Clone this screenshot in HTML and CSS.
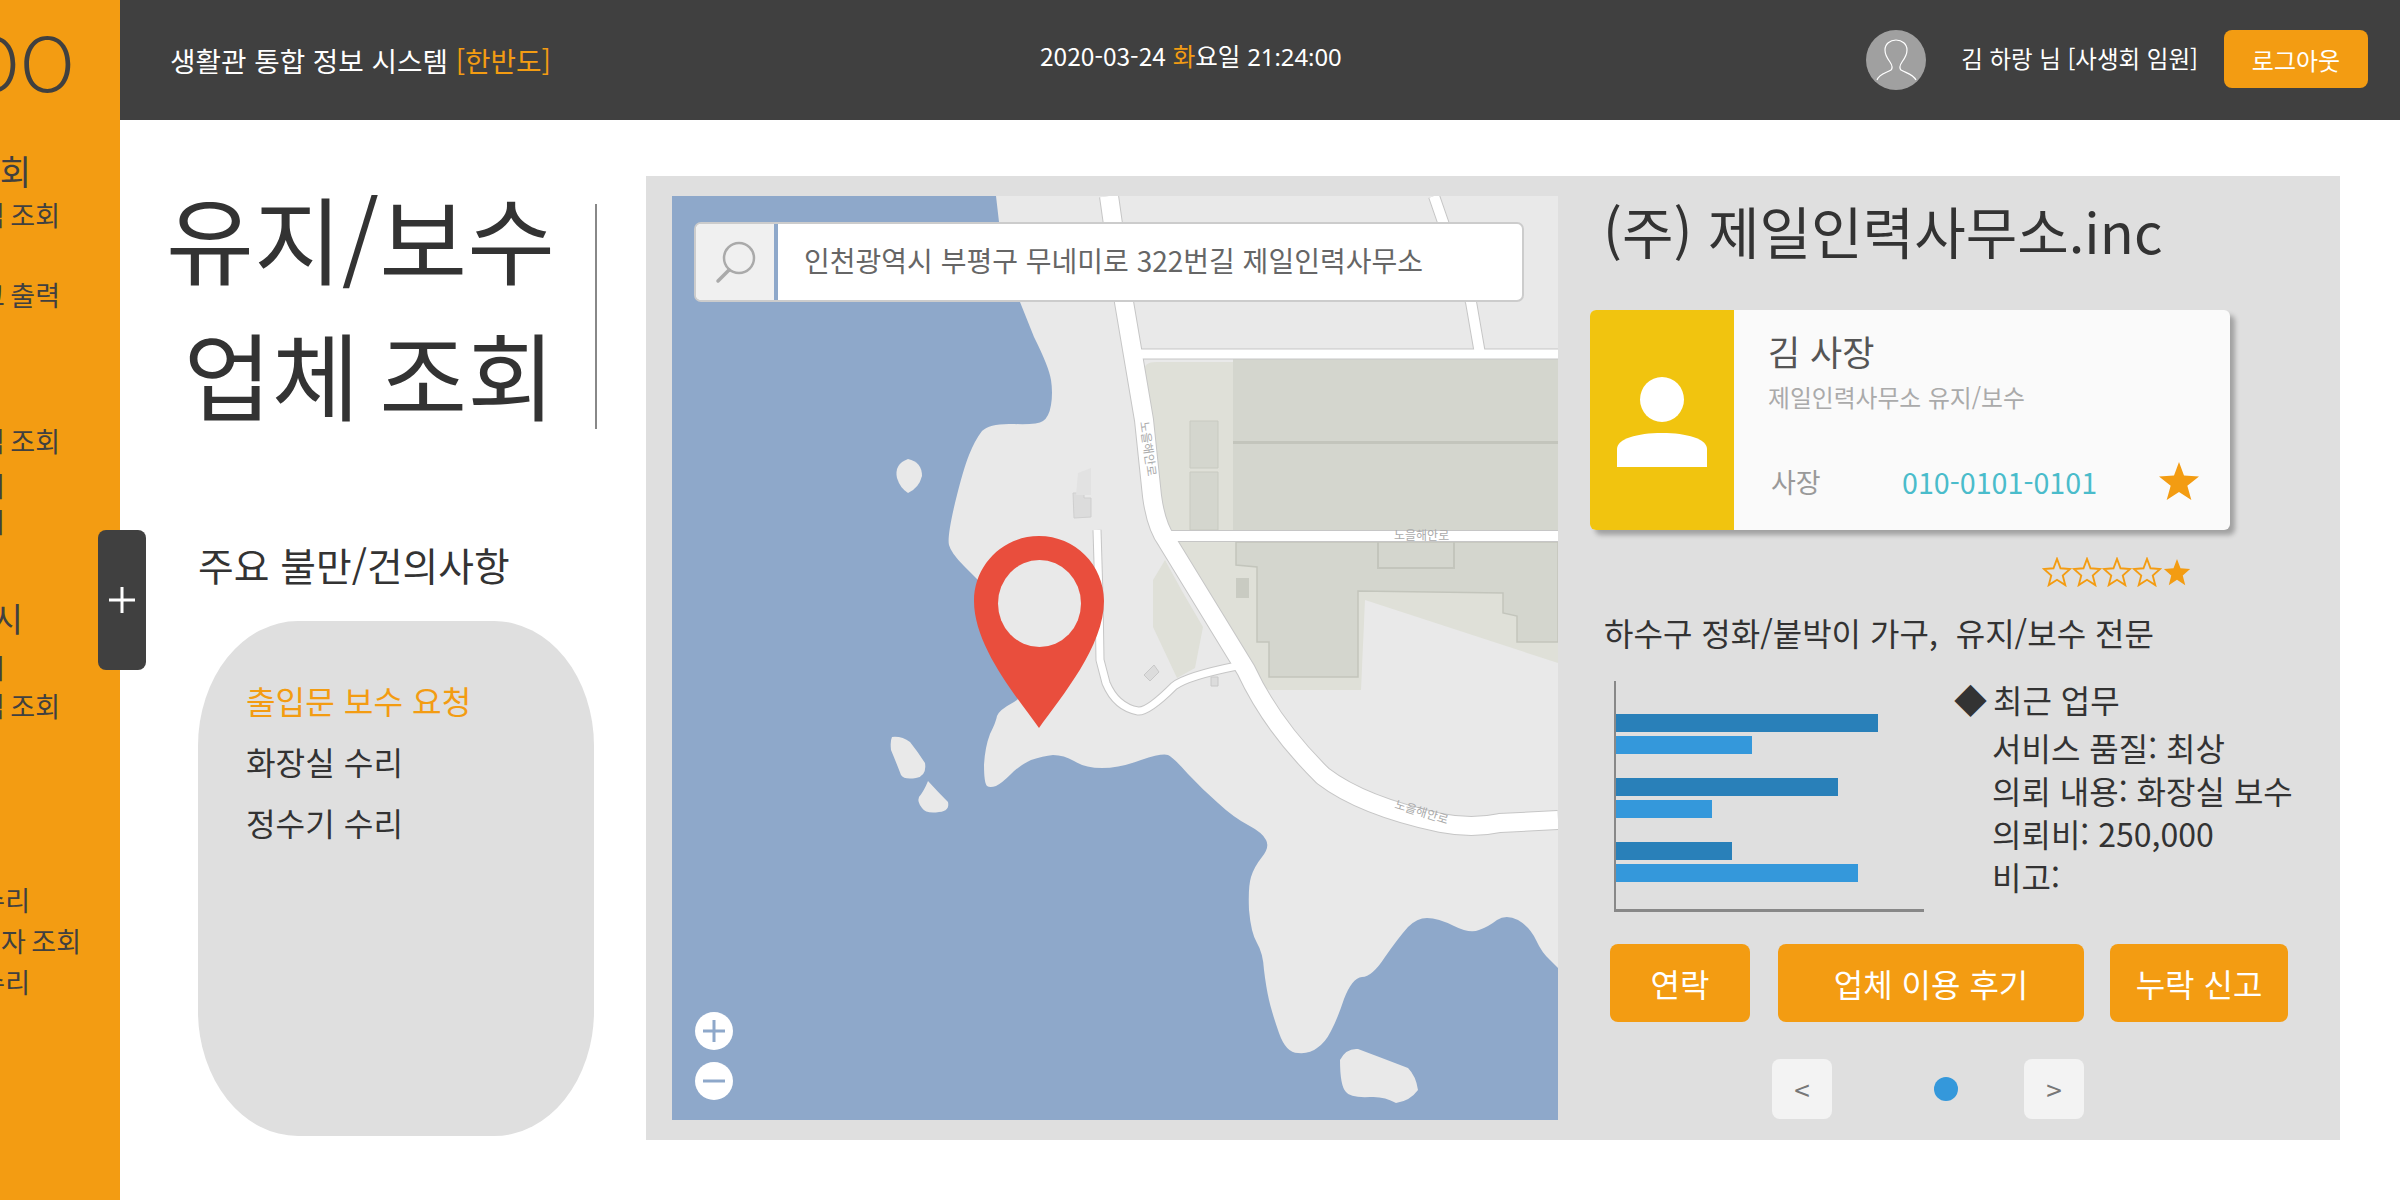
FILE: index.html
```html
<!DOCTYPE html>
<html lang="ko">
<head>
	<meta charset="utf-8">
	<title>유지/보수 업체 조회</title>
	<link rel="stylesheet" href="styles.css">
</head>
<body>
	<div class="app">
		<aside class="sidebar">
			<div class="logo">OO</div>
			<div class="nav-row nav-head end-30 gap-top">업무 조회</div>
			<div class="nav-row end-60 gap-0">내역 조회</div>
			<div class="nav-row end-60 gap-1">보고 출력</div>
			<div class="nav-row end-60 gap-2">내역 조회</div>
			<div class="nav-row end-2 gap-3">시설 관리</div>
			<div class="nav-row end-2 gap-4">시설 관리</div>
			<div class="nav-row nav-head end-22 gap-5">시설 감시</div>
			<div class="nav-row end-2 gap-6">시설 관리</div>
			<div class="nav-row end-60 gap-7">내역 조회</div>
			<div class="nav-row end-29 gap-8">시설 수리</div>
			<div class="nav-row end-80 gap-9">관리자 조회</div>
			<div class="nav-row end-29 gap-9">시설 수리</div>
		</aside>
		<button class="side-toggle" type="button">
			<svg width="28" height="28" viewBox="0 0 28 28"><path d="M14 1v26M1 14h26" stroke="#fff" stroke-width="3"/></svg>
		</button>

		<div class="page">
			<header class="topbar">
				<div class="system-name">생활관 통합 정보 시스템 <span class="accent">[한반도]</span></div>
				<div class="clock">2020-03-24 <span class="accent">화</span>요일 <span class="clock-time">21:24:00</span></div>
				<div class="avatar">
					<svg width="60" height="60" viewBox="0 0 60 60"><path d="M11 50C13 44 20 43 25 40C27 38 26 35 24 32C21 28 19 24 19 20C19 14 24 10 30 10C36 10 41 14 41 20C41 24 39 28 36 32C34 35 33 38 35 40C40 43 47 44 50 50" fill="none" stroke="#fff" stroke-width="1.2"/></svg>
				</div>
				<div class="user-name">김 하랑 님 [사생회 임원]</div>
				<button class="logout" type="button">로그아웃</button>
			</header>

			<main class="content">
				<section class="left-col">
					<div class="page-title">
						<h1>유지/보수<br>업체 조회</h1>
					</div>
					<h2 class="complaint-title">주요 불만/건의사항</h2>
					<ul class="complaints">
						<li class="active">출입문 보수 요청</li>
						<li>화장실 수리</li>
						<li>정수기 수리</li>
					</ul>
				</section>

				<section class="panel">
					<div class="map">
						<svg class="map-art" width="886" height="924" viewBox="0 0 886 924">
							<rect width="886" height="924" fill="#8ea8ca"/>
							<!-- land -->
							<path fill="#e9e9e9" d="M324 0L327 26L348 106L362 141Q377 171 379 184Q381 197 379 209Q377 221 371 225Q365 229 342 228Q318 227 310 235Q303 244 297 259Q291 274 283 307Q275 341 277 349Q279 357 292 370L306 384L340 460L365 490L342 506Q327 514 325 520Q324 526 318 538Q313 551 312 569Q312 587 315 590Q318 592 324 590Q330 587 339 578Q348 569 359 564Q371 560 381 559Q392 559 402 565Q413 572 430 572Q448 572 469 564Q490 557 496 559Q502 562 516 578Q531 594 546 607Q561 621 576 629Q591 637 594 644Q598 651 590 661Q582 671 579 681Q576 691 577 714Q579 737 585 747Q591 757 592 774Q594 791 597 804Q600 817 607 837Q614 857 626 857Q638 858 645 852Q653 847 659 835Q665 824 672 803Q680 782 690 781Q700 781 713 761Q727 741 736 731Q745 722 755 722Q766 722 782 730Q798 738 807 734Q816 731 825 724Q834 718 846 724Q858 731 864 744Q870 757 878 764L886 772L886 0Z"/>
							<path fill="#e9e9e9" d="M236 263Q250 266 250 280Q247 292 236 297Q228 292 225 282Q222 268 236 263Z"/>
							<path fill="#e9e9e9" d="M220 541Q230 540 238 546Q246 556 253 567Q255 580 244 582Q232 584 229 579Q224 566 219 554Q218 545 220 541Z"/>
							<path fill="#e9e9e9" d="M256 585Q266 596 276 606Q278 615 267 616Q254 618 250 612Q245 606 247 601Q252 595 256 585Z"/>
							<path fill="#e9e9e9" d="M668 864Q674 852 686 853Q710 862 736 872Q744 880 746 894Q738 905 724 907Q712 900 698 901Q678 902 674 896Q668 890 668 864Z"/>

							<!-- blocks -->
							<path fill="#dfe0d8" d="M484 166H886V334H490Q484 300 472 175Q472 166 484 166Z"/>
							<path fill="#d4d6ce" d="M561 163H886V334H561Z"/>
							<path fill="#c3c5bc" d="M561 245H886V248H561Z"/>
							<path fill="#d4d6ce" stroke="#c8cac1" d="M518 225H546V272H518ZM518 276H546V334H518Z"/>
							<path fill="#dfe0d8" d="M505 346H886V467L693 404L689 494H597L570 480Z"/>
							<path fill="#d4d6ce" stroke="#c3c5bc" stroke-width="1.5" d="M564 346H886V446H845V420L831 417V397L686 395V481H597V446H585V371L564 369Z"/>
							<path fill="none" stroke="#c3c5bc" stroke-width="2" d="M706 346V372H782V346"/>
							<path fill="#c9cbc2" d="M564 382H577V402H564Z"/>
							<path fill="#dfe0d8" d="M493 364L481 384V431L505 482L523 472L531 431L510 395Z"/>
							<path fill="#dcdcdc" stroke="#cfcfcf" d="M401 297H412V302H419V321L402 322Z"/>
							<path fill="#e2e2e2" d="M406 277L419 272V299H404Z"/>
							<path fill="#dcdcdc" stroke="#c8c8c8" d="M482 469L487 476L478 485L472 479Z"/>
							<path fill="#dcdcdc" stroke="#c8c8c8" d="M539 481H546V490H539Z"/>

							<!-- roads -->
							<g class="road-edge">
								<path stroke-width="20" d="M437 0L452 106L472 224L480 300Q484 330 495 345L574 474Q600 530 651 580Q690 610 769 627Q800 633 828 627L886 624"/>
								<path stroke-width="12" d="M762 0L771 26L799 106L808 158"/>
								<path stroke-width="11" d="M462 158H886"/>
								<path stroke-width="12" d="M495 340H886"/>
								<path stroke-width="9" d="M425 334L427 400L428 464L434 487Q444 511 466 515Q476 516 502 490Q515 480 565 470"/>
							</g>
							<g class="road">
								<path stroke-width="18" d="M437 0L452 106L472 224L480 300Q484 330 495 345L574 474Q600 530 651 580Q690 610 769 627Q800 633 828 627L886 624"/>
								<path stroke-width="10" d="M762 0L771 26L799 106L808 158"/>
								<path stroke-width="9" d="M462 158H886"/>
								<path stroke-width="10" d="M495 340H886"/>
								<path stroke-width="7" d="M425 334L427 400L428 464L434 487Q444 511 466 515Q476 516 502 490Q515 480 565 470"/>
							</g>
							<text class="road-label" x="722" y="344">노을해안로</text>
							<text class="road-label" transform="translate(468 226) rotate(82)">노을해안로</text>
							<text class="road-label" transform="translate(722 612) rotate(17)">노을해안로</text>

							<!-- pin -->
							<path fill="#e94e3d" d="M367 340C403 340 432 369 432 405C432 450 390 500 367 532C344 500 302 450 302 405C302 369 331 340 367 340Z"/>
							<ellipse cx="367.500" cy="407.500" rx="41.500" ry="43.500" fill="#e9e9e9"/>
						</svg>

						<div class="search-bar">
							<div class="search-icon">
								<svg width="44" height="44" viewBox="0 0 44 44"><ellipse cx="26" cy="18" rx="15" ry="15" fill="none" stroke="#aaa" stroke-width="2.500"/><path d="M16 30L5 41" stroke="#aaa" stroke-width="3.500" stroke-linecap="round"/></svg>
							</div>
							<div class="search-text">인천광역시 부평구 무네미로 322번길 제일인력사무소</div>
						</div>
						<div class="zoom-ctrl">
							<div class="zoom-btn"><svg width="38" height="38" viewBox="0 0 38 38"><path d="M19 8v22M8 19h22" stroke="#8ea8ca" stroke-width="3"/></svg></div>
							<div class="zoom-btn"><svg width="38" height="38" viewBox="0 0 38 38"><path d="M8 19h22" stroke="#8ea8ca" stroke-width="3"/></svg></div>
						</div>
					</div>

					<div class="info">
						<h2 class="company">(주) 제일인력사무소.inc</h2>
						<div class="card">
							<div class="card-side">
								<svg width="90" height="90" viewBox="0 0 90 90"><ellipse cx="45" cy="22.500" rx="22" ry="22.500"/><path d="M0 90V72C0 62 20 56 45 56C70 56 90 62 90 72V90Z"/></svg>
							</div>
							<div class="card-body">
								<div class="card-name">김 사장</div>
								<div class="card-sub">제일인력사무소 유지/보수</div>
								<div class="card-foot">
									<span class="card-role">사장</span>
									<span class="card-phone">010-0101-0101</span>
									<svg class="card-star" width="40" height="38" viewBox="0 0 24 24" preserveAspectRatio="none"><path d="M12 0L15 8.500L24 9.200L17 15L19.400 24L12 19L4.600 24L7 15L0 9.200L9 8.500Z"/></svg>
								</div>
							</div>
						</div>
						<div class="rating">
							<svg class="star-line" width="30" height="30" viewBox="0 0 24 24"><path d="M12 1.500L14.800 9L22.500 9.600L16.600 14.800L18.600 22.500L12 18.200L5.400 22.500L7.400 14.800L1.500 9.600L9.200 9Z"/></svg>
							<svg class="star-line" width="30" height="30" viewBox="0 0 24 24"><path d="M12 1.500L14.800 9L22.500 9.600L16.600 14.800L18.600 22.500L12 18.200L5.400 22.500L7.400 14.800L1.500 9.600L9.200 9Z"/></svg>
							<svg class="star-line" width="30" height="30" viewBox="0 0 24 24"><path d="M12 1.500L14.800 9L22.500 9.600L16.600 14.800L18.600 22.500L12 18.200L5.400 22.500L7.400 14.800L1.500 9.600L9.200 9Z"/></svg>
							<svg class="star-line" width="30" height="30" viewBox="0 0 24 24"><path d="M12 1.500L14.800 9L22.500 9.600L16.600 14.800L18.600 22.500L12 18.200L5.400 22.500L7.400 14.800L1.500 9.600L9.200 9Z"/></svg>
							<svg class="star-full" width="30" height="30" viewBox="0 0 24 24"><path d="M12 1.500L14.800 9L22.500 9.600L16.600 14.800L18.600 22.500L12 18.200L5.400 22.500L7.400 14.800L1.500 9.600L9.200 9Z"/></svg>
						</div>
						<p class="slogan">하수구 정화/붙박이 가구,&nbsp; 유지/보수 전문</p>

						<div class="summary">
							<div class="chart">
								<div class="bar-group">
									<div class="bar dark" style="width:262px"></div>
									<div class="bar light" style="width:136px"></div>
								</div>
								<div class="bar-group">
									<div class="bar dark" style="width:222px"></div>
									<div class="bar light" style="width:96px"></div>
								</div>
								<div class="bar-group">
									<div class="bar dark" style="width:116px"></div>
									<div class="bar light" style="width:242px"></div>
								</div>
							</div>
							<div class="recent">
								<div class="recent-head"><span class="diamond">◆</span>최근 업무</div>
								<div>서비스 품질: 최상</div>
								<div>의뢰 내용: 화장실 보수</div>
								<div>의뢰비: 250,000</div>
								<div>비고:</div>
							</div>
						</div>

						<div class="actions">
							<button class="btn btn-contact" type="button">연락</button>
							<button class="btn btn-review" type="button">업체 이용 후기</button>
							<button class="btn btn-report" type="button">누락 신고</button>
						</div>

						<div class="pager">
							<button class="page-btn" type="button">&lt;</button>
							<span class="page-dot"></span>
							<button class="page-btn" type="button">&gt;</button>
						</div>
					</div>
				</section>
			</main>
		</div>
	</div>
</body>
</html>
```

FILE: styles.css
```css
* {
	box-sizing: border-box;
}
body {
	margin: 0;
	font-family: "Noto Sans CJK KR", "Noto Sans", sans-serif;
	color: #333;
	background-color: #fff;
}
button {
	font-family: inherit;
	border: none;
	padding: 0;
}
.app {
	display: flex;
	position: relative;
	width: 2400px;
	height: 1200px;
	overflow: hidden;
}

/* sidebar, its text runs off the left edge */
.sidebar {
	flex: 0 0 120px;
	height: 1200px;
	overflow: hidden;
	background-color: #f39c12;
	color: #404040;
}
.logo {
	display: flex;
	justify-content: flex-end;
	width: 75px;
	height: 120px;
	font-size: 76px;
	font-weight: 300;
	line-height: 118px;
	white-space: nowrap;
}
.nav-row {
	display: flex;
	justify-content: flex-end;
	height: 40px;
	font-size: 27px;
	line-height: 40px;
	white-space: nowrap;
	word-spacing: -2px;
}
.nav-head {
	font-size: 34px;
}
.end-2 { width: 5px; }
.end-22 { width: 23px; }
.end-29 { width: 30px; }
.end-30 { width: 31px; }
.end-60 { width: 60px; }
.end-80 { width: 81px; }
.gap-top { margin-top: 31px; }
.gap-0 { margin-top: 4px; }
.gap-1 { margin-top: 40px; }
.gap-2 { margin-top: 106px; }
.gap-3 { margin-top: 5px; }
.gap-4 { margin-top: -4px; }
.gap-5 { margin-top: 56px; }
.gap-6 { margin-top: 10px; }
.gap-7 { margin-top: -2px; }
.gap-8 { margin-top: 154px; }
.gap-9 { margin-top: 1px; }

.side-toggle {
	position: absolute;
	left: 98px;
	top: 530px;
	display: flex;
	align-items: center;
	justify-content: center;
	width: 48px;
	height: 140px;
	border-radius: 8px;
	background-color: #404040;
}

.page {
	flex: 1;
	min-width: 0;
}

/* top bar */
.topbar {
	display: flex;
	align-items: center;
	height: 120px;
	padding-left: 50px;
	padding-right: 32px;
	background-color: #404040;
	color: #fff;
}
.accent {
	color: #f39c12;
}
.system-name {
	flex: 0 0 870px;
	font-size: 27.700px;
}
.clock {
	margin-bottom: 10px;
	font-size: 24.500px;
}
.clock-time {
	font-family: "Noto Sans", sans-serif;
	font-size: 23.800px;
}
.avatar {
	width: 60px;
	height: 60px;
	margin-left: auto;
	border-radius: 50%;
	background-color: #a0a0a0;
}
.avatar svg {
	display: block;
}
.user-name {
	margin-left: 35px;
	margin-bottom: 4px;
	font-size: 23.500px;
}
.logout {
	width: 144px;
	height: 58px;
	margin-left: 26px;
	margin-bottom: 2px;
	border-radius: 8px;
	background-color: #f39c12;
	color: #fff;
	font-size: 24px;
}

.content {
	display: flex;
	height: 1080px;
}

/* left column */
.left-col {
	flex: 0 0 526px;
}
.page-title {
	width: 477px;
	height: 225px;
	margin-top: 84px;
	padding-right: 40px;
	border-right: 2px solid #888;
}
.page-title h1 {
	margin: 0;
	font-size: 95.500px;
	font-weight: 400;
	line-height: 136px;
	text-align: right;
	white-space: nowrap;
	word-spacing: -7px;
	transform: translateY(-35px);
}
.complaint-title {
	margin: 105px 0 0 78px;
	font-size: 38.800px;
	font-weight: 400;
	line-height: 60px;
}
.complaints {
	width: 396px;
	height: 515px;
	margin: 27px 0 0 78px;
	padding: 49px 0 0 48px;
	list-style: none;
	border-radius: 100px / 125px;
	background-color: #dfdfdf;
}
.complaints li {
	font-size: 32.200px;
	line-height: 61px;
}
.complaints .active {
	color: #f39c12;
}

/* main panel */
.panel {
	display: flex;
	width: 1694px;
	height: 964px;
	margin-top: 56px;
	padding: 20px 0 20px 26px;
	background-color: #dfdfdf;
}
.map {
	position: relative;
	flex: 0 0 886px;
	height: 924px;
	overflow: hidden;
}
.map-art {
	display: block;
}
.road-edge path,
.road path {
	fill: none;
}
.road-edge path {
	stroke: #c6c6c6;
}
.road path {
	stroke: #fff;
}
.road-label {
	font-size: 12px;
	fill: #aaa;
}
.search-bar {
	position: absolute;
	left: 22px;
	top: 26px;
	display: flex;
	width: 830px;
	height: 80px;
	border: 2px solid #ccc;
	border-radius: 7px;
	overflow: hidden;
	background-color: #fff;
}
.search-icon {
	display: flex;
	align-items: center;
	justify-content: center;
	flex: 0 0 82px;
	border-right: 4px solid #8ea8ca;
	background-color: #f0f0f0;
}
.search-text {
	padding-left: 26px;
	color: #666;
	font-size: 28px;
	line-height: 72px;
}
.zoom-ctrl {
	position: absolute;
	left: 23px;
	top: 816px;
	display: flex;
	flex-direction: column;
	gap: 12px;
}
.zoom-btn {
	width: 38px;
	height: 38px;
	border-radius: 50%;
	background-color: #fff;
}
.zoom-btn svg {
	display: block;
}

/* company info */
.info {
	flex: 1;
	padding-left: 32px;
}
.company {
	margin: 0 0 46px 13px;
	font-size: 56px;
	font-weight: 400;
	line-height: 68px;
}
.card {
	display: flex;
	width: 640px;
	height: 220px;
	overflow: hidden;
	border-radius: 6px;
	background-color: #fafafa;
	box-shadow: 5px 5px 5px rgba(0, 0, 0, 0.28);
}
.card-side {
	display: flex;
	align-items: center;
	justify-content: center;
	flex: 0 0 144px;
	padding-top: 4px;
	background-color: #f1c40f;
}
.card-side svg {
	fill: #fff;
}
.card-body {
	flex: 1;
	padding: 15px 0 0 34px;
}
.card-name {
	color: #555;
	font-size: 35px;
	line-height: 52px;
}
.card-sub {
	margin-top: 2px;
	color: #aaa;
	font-size: 23.800px;
	line-height: 36px;
}
.card-foot {
	display: flex;
	align-items: center;
	margin-top: 46px;
	height: 40px;
}
.card-role {
	width: 134px;
	padding-left: 3px;
	color: #999;
	font-size: 27px;
}
.card-phone {
	width: 257px;
	color: #4abccb;
	font-size: 28.700px;
}
.card-star path,
.star-full path {
	fill: #f39c12;
}
.rating {
	display: flex;
	width: 150px;
	height: 30px;
	margin: 27px 0 0 452px;
}
.star-line path {
	fill: none;
	stroke: #f39c12;
	stroke-width: 1.500;
}
.slogan {
	margin: 25px 0 29px 14px;
	font-size: 32px;
	line-height: 40px;
}
.summary {
	display: flex;
	height: 232px;
}
.chart {
	display: flex;
	flex-direction: column;
	gap: 24px;
	flex: 0 0 310px;
	height: 231px;
	margin-left: 24px;
	padding-top: 33px;
	border-left: 2px solid #888;
	border-bottom: 3px solid #888;
}
.bar-group {
	display: flex;
	flex-direction: column;
	gap: 4px;
}
.bar {
	height: 18px;
}
.bar.dark {
	background-color: #2980b9;
}
.bar.light {
	background-color: #3498db;
}
.recent {
	margin-top: -3px;
	margin-left: 31px;
	padding-left: 37px;
	font-size: 32px;
	line-height: 43px;
}
.recent-head {
	position: relative;
	margin-bottom: 5px;
	padding-left: 1px;
}
.diamond {
	position: absolute;
	left: -38px;
	top: 0;
	font-size: 33px;
	line-height: 43px;
}
.actions {
	display: flex;
	margin: 31px 0 0 20px;
}
.btn {
	height: 78px;
	border-radius: 8px;
	background-color: #f39c12;
	color: #fff;
	font-size: 32px;
}
.btn-contact {
	width: 140px;
}
.btn-review {
	width: 306px;
	margin-left: 28px;
}
.btn-report {
	width: 178px;
	margin-left: 26px;
}
.pager {
	display: flex;
	align-items: center;
	margin: 37px 0 0 182px;
}
.page-btn {
	width: 60px;
	height: 60px;
	border-radius: 8px;
	background-color: #f3f3f3;
	color: #777;
	font-size: 28px;
}
.page-dot {
	width: 24px;
	height: 24px;
	margin: 0 66px 0 102px;
	border-radius: 50%;
	background-color: #3498db;
}
```
